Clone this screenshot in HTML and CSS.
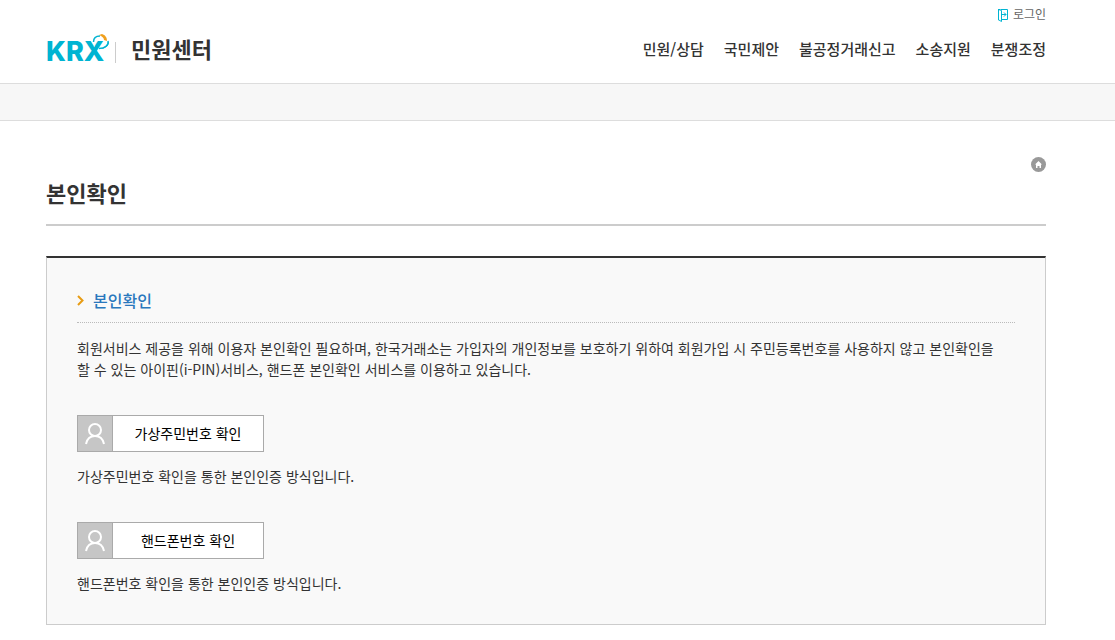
FILE: index.html
```html
<!DOCTYPE html>
<html lang="ko">
<head>
	<meta charset="UTF-8">
	<title>본인확인 | KRX 민원센터</title>
	<link rel="stylesheet" href="styles.css">
</head>
<body>
<div id="header">
	<div class="util">
		<a href="#">
			<svg width="12" height="16" viewBox="0 -2 12 16" fill="none" stroke="#00b4d2"><path d="M4 1.500H10.500V11.500H4M1.500 1V12M1 1.500H3.500M1 11.500L4.500 13.500V2.500L1.500 1.500M4 6.500H9M7 4.500L9 6.500L7 8.500"/></svg>
			<span>로그인</span>
		</a>
	</div>
	<div class="gnb">
		<h1>
			<a href="#" class="logo">KRX<svg width="18" height="18" viewBox="0 0 18 18" fill="none"><path d="M1.500 8C1.500 4 4 2 8 2M16 7C17 11 13 14.500 7 14.500" stroke="#00b4d2" stroke-width="1.500"/><path d="M13.500 12L17 7.500C17 12 13 15.500 7 15C10 14.500 12 13.500 13.500 12Z" fill="#00b4d2"/><path d="M7 1L10 0C13 1 15 3 15 7L12 6C12 4 10 2 7 1Z" fill="#f0a01e"/></svg></a>
			<a href="#" class="center">민원센터</a>
		</h1>
		<ul>
			<li><a href="#">민원/상담</a></li>
			<li><a href="#">국민제안</a></li>
			<li><a href="#">불공정거래신고</a></li>
			<li><a href="#">소송지원</a></li>
			<li><a href="#">분쟁조정</a></li>
		</ul>
	</div>
</div>
<div id="subbar"></div>
<div id="content">
	<div class="location">
		<a href="#" aria-label="홈"><svg width="15" height="15" viewBox="0 0 15 15"><circle cx="7.500" cy="7.500" r="7.500" fill="#999"/><path d="M7.500 4L11 7.500H10V11H8.500V9H6.500V11H5V7.500H4Z" fill="#fff"/></svg></a>
	</div>
	<h2>본인확인</h2>
	<div class="box">
		<h3><svg width="7" height="11" viewBox="0 0 7 11" fill="none" stroke="#e89c14" stroke-width="2"><path d="M1 1L5.500 5.500L1 10"/></svg>본인확인</h3>
		<p class="info">회원서비스 제공을 위해 이용자 본인확인 필요하며, 한국거래소는 가입자의 개인정보를 보호하기 위하여 회원가입 시 주민등록번호를 사용하지 않고 본인확인을 할 수 있는 아이핀(i-PIN)서비스, 핸드폰 본인확인 서비스를 이용하고 있습니다.</p>
		<div class="confirm">
			<button type="button"><i><svg width="20" height="22" viewBox="0 0 20 22" fill="none" stroke="#fff" stroke-width="2"><circle cx="10" cy="7" r="6"/><path d="M1 21C2 16 5 13 10 13S18 16 19 21"/></svg></i><span>가상주민번호 확인</span></button>
			<p>가상주민번호 확인을 통한 본인인증 방식입니다.</p>
		</div>
		<div class="confirm">
			<button type="button"><i><svg width="20" height="22" viewBox="0 0 20 22" fill="none" stroke="#fff" stroke-width="2"><circle cx="10" cy="7" r="6"/><path d="M1 21C2 16 5 13 10 13S18 16 19 21"/></svg></i><span>핸드폰번호 확인</span></button>
			<p>핸드폰번호 확인을 통한 본인인증 방식입니다.</p>
		</div>
	</div>
</div>
</body>
</html>
```

FILE: styles.css
```css
*{margin: 0;padding: 0;box-sizing: border-box;list-style: none;}
body{font-family: "Noto Sans CJK KR",sans-serif;font-size: 14px;line-height: 21px;color: #333;background: #fff;}
a{color: inherit;text-decoration: none;}
svg{display: block;flex: none;}
#header{padding: 4px 69px 0 46px;height: 84px;border-bottom: 1px solid #ddd;}
.util{display: flex;justify-content: flex-end;font-size: 12px;line-height: 20px;color: #666;}
.util a{display: flex;align-items: center;gap: 4px;}
.gnb{display: flex;justify-content: space-between;align-items: center;height: 48px;}
.gnb h1{display: flex;align-items: center;font-size: 22px;font-weight: 700;line-height: 32px;}
.gnb .logo{position: relative;width: 69px;padding-top: 8px;font-family: Inter,sans-serif;font-size: 27px;font-weight: 800;color: #00b4d2;}
.gnb .logo svg{position: absolute;left: 46px;top: 6px;}
.gnb .center{display: flex;align-items: center;gap: 15px;}
.gnb .center:before{content: "";width: 1px;height: 21px;margin-top: 8px;background: #ccc;}
.gnb ul{display: flex;gap: 20px;font-size: 15px;font-weight: 500;}
#subbar{height: 37px;background: #f7f7f7;border-bottom: 1px solid #ddd;}
#content{padding: 36px 69px 15px 46px;}
.location{display: flex;justify-content: flex-end;}
h2{margin-bottom: 30px;padding: 4px 0 15px;border-bottom: 2px solid #ccc;font-size: 22px;font-weight: 700;line-height: 33px;}
.box{padding: 30px;border: 1px solid #ccc;border-top: 2px solid #333;background: #f9f9f9;}
.box h3{display: flex;align-items: center;gap: 9px;padding-bottom: 10px;border-bottom: 1px dotted #bbb;font-size: 16px;font-weight: 500;line-height: 24px;color: #2a78bd;}
.info{margin-top: 15px;padding-right: 12px;word-break: keep-all;}
.confirm{margin-top: 35px;}
.confirm button{display: flex;width: 187px;height: 37px;border: 1px solid #aaa;background: #fff;font: inherit;color: #000;cursor: pointer;}
.confirm i{display: flex;align-items: center;justify-content: center;width: 35px;height: 35px;border-right: 1px solid #aaa;background: #c6c6c6;}
.confirm span{flex: 1;line-height: 35px;}
.confirm p{margin-top: 14px;}
```
